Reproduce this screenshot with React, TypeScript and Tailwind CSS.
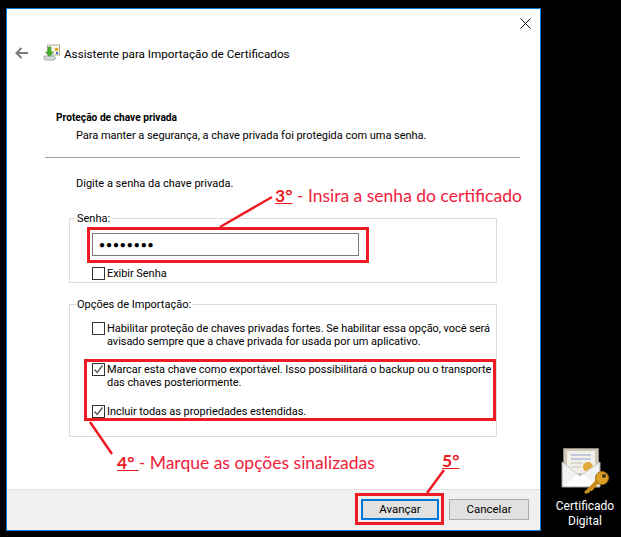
const ui = "font-['Roboto',sans-serif] text-[11px] leading-[13px] text-black";

function Check({ checked }: { checked?: boolean }) {
  return (
    <span className="flex h-[13px] w-[13px] shrink-0 items-center justify-center border border-[#333333] bg-white">
      {checked ? (
        <svg width="11" height="11" viewBox="0 0 11 11" fill="none">
          <path d="M1.5 5.5 4.2 8.5 9.5 1.5" stroke="#555555" strokeWidth="1.3" />
        </svg>
      ) : null}
    </span>
  );
}

function Option({ checked, children, className }: { checked?: boolean; children: React.ReactNode; className?: string }) {
  return (
    <div className={`flex gap-[2px] ${className ?? ''}`}>
      <Check checked={checked} />
      <p className="whitespace-nowrap tracking-[-0.05px]">{children}</p>
    </div>
  );
}

function Group({ label, className, children }: { label: string; className: string; children: React.ReactNode }) {
  return (
    <fieldset className={`ml-[62px] w-[428px] border border-[#dcdcdc] ${className}`}>
      <legend className="ml-[6px] px-[1px] leading-[13px]">{label}</legend>
      {children}
    </fieldset>
  );
}

function WizardIcon() {
  return (
    <svg width="17" height="17" viewBox="0 0 17 17">
      <rect x="4.500" y="1" width="12" height="10" fill="#f4f1e6" stroke="#b5ad95" />
      <path d="M1 12h10l2 2-2 2H2l-1-2z" fill="#d5d9dc" stroke="#8d9499" strokeWidth=".7" />
      <path d="M8 3v5h2.500L6.500 12.500 2.500 8H5V3z" fill="#48b02c" stroke="#2f8a1c" strokeWidth=".5" />
      <rect x="12" y="4" width="3" height="3" fill="#e8a020" />
      <rect x="13" y="8" width="2" height="2" fill="#2f6fcb" />
    </svg>
  );
}

function CertIcon() {
  return (
    <svg width="48" height="50" viewBox="0 0 48 50">
      <path d="M2.500 2.500h35v26h-35z" fill="#cfc8b8" stroke="#8f897b" />
      <path d="M6 5h28v22H6z" fill="#f1efe8" />
      <path d="M10 9h20M10 13h20" stroke="#aebed8" strokeWidth="1.500" />
      <path d="M10 17h12M10 21h10" stroke="#d5d2c8" strokeWidth="1.500" />
      <circle cx="27" cy="21" r="5" fill="#e0a93a" />
      <path d="M1 16 19 29 39 16v25H1z" fill="#f2f2f2" />
      <path d="M1 41 17 28l2 2 2-2 18 13z" fill="#ffffff" />
      <path d="M1 16 19 30 39 16" fill="none" stroke="#c8c8c8" />
      <path d="M1 16v25h38V16" fill="none" stroke="#a5a5a5" />
      <path d="M36 33 23 46l2 2 2-1 1 0 1-2 2 0 9-10z" fill="#c98f1e" />
      <circle cx="41" cy="32" r="6.500" fill="#dca02a" stroke="#9b6c12" />
      <circle cx="43" cy="30" r="2" fill="#4a3a1c" />
    </svg>
  );
}

export default function App() {
  return (
    <div className={`relative h-[537px] w-[621px] overflow-hidden bg-black pl-[6px] pt-[8px] ${ui}`}>
      <div className="flex h-[523px] w-[535px] flex-col border border-[#0078d7] bg-white">
        <div className="flex h-[20px] justify-end pr-[9px] pt-[9px]">
          <svg width="11" height="11" viewBox="0 0 11 11" stroke="#111111" fill="none">
            <path d="M.5.5l10 10M10.500.5l-10 10" />
          </svg>
        </div>
        <div className="mt-[15px] flex h-[17px] items-center pl-[8px]">
          <svg width="13" height="12" viewBox="0 0 13 12" fill="none" stroke="#7a7a7a" strokeWidth="2">
            <path d="M13 6H2M6.500 1 1.500 6l5 5" />
          </svg>
          <span className="ml-[15px]"><WizardIcon /></span>
          <span className="ml-[4px] pt-[3px] text-[11.700px]">Assistente para Importação de Certificados</span>
        </div>
        <h2 className="ml-[49px] mt-[50px] text-[10.200px] font-bold">Proteção de chave privada</h2>
        <p className="ml-[69px] mt-[5px] tracking-[-0.03px]">Para manter a segurança, a chave privada foi protegida com uma senha.</p>
        <div className="ml-[38px] mt-[15px] h-px w-[475px] bg-[#a0a0a0]" />
        <p className="ml-[69px] mt-[19px]">Digite a senha da chave privada.</p>

        <Group label="Senha:" className="mt-[22px] h-[71px]">
          <div className="pl-[22px] pt-[8px]">
            <div className="flex h-[23px] w-[267px] items-center border border-[#7a7a7a] pl-[6px] text-[10px] tracking-[0.9px]">
              ●●●●●●●●
            </div>
            <div className="mt-[11px]">
              <Option>Exibir Senha</Option>
            </div>
          </div>
        </Group>

        <Group label="Opções de Importação:" className="mt-[15px] h-[139px]">
          <div className="pl-[22px] pt-[11px]">
            <Option>
              Habilitar proteção de chaves privadas fortes. Se habilitar essa opção, você será<br />
              avisado sempre que a chave privada for usada por um aplicativo.
            </Option>
            <Option checked className="mt-[15px]">
              Marcar esta chave como exportável. Isso possibilitará o backup ou o transporte<br />
              das chaves posteriormente.
            </Option>
            <Option checked className="mt-[16px]">
              Incluir todas as propriedades estendidas.
            </Option>
          </div>
        </Group>

        <div className="mt-auto flex h-[41px] justify-end gap-[10px] border-t border-[#dfdfdf] bg-[#f0f0f0] pr-[11px] pt-[9px] text-[11.500px]">
          <button className="h-[21px] w-[78px] border-2 border-[#0078d7] bg-[#e1e1e1]">Avançar</button>
          <button className="h-[21px] w-[80px] border border-[#adadad] bg-[#e1e1e1]">Cancelar</button>
        </div>
      </div>

      {/* anotacoes em vermelho por cima do assistente */}
      <div className="absolute left-[87px] top-[227px] h-[36px] w-[282px] border-[3px] border-[#ed1c24]" />
      <div className="absolute left-[84px] top-[359px] h-[62px] w-[412px] border-[3px] border-[#ed1c24]" />
      <div className="absolute left-[355px] top-[493px] h-[32px] w-[89px] border-[3px] border-[#ed1c24]" />
      <svg className="absolute left-0 top-0" width="621" height="537" fill="none" stroke="#ed1c24" strokeWidth="2.500">
        <path d="M272 197 220 227M90 422 112 454M444 470 427 493" />
      </svg>
      <p className="absolute left-[275px] top-[184px] whitespace-nowrap font-['Lato',sans-serif] text-[17.500px] leading-[24px] text-[#f0203a]">
        <b className="text-[#ed1c24] underline">3°</b> - Insira a senha do certificado
      </p>
      <p className="absolute left-[117px] top-[451px] whitespace-nowrap font-['Lato',sans-serif] text-[17.500px] leading-[24px] text-[#f0203a]">
        <b className="text-[#ed1c24] underline">4° </b> - Marque as opções sinalizadas
      </p>
      <p className="absolute left-[442px] top-[449px] whitespace-nowrap font-['Lato',sans-serif] text-[17.500px] font-bold leading-[24px] text-[#ed1c24] underline">
        5°
      </p>

      {/* icone da area de trabalho */}
      <div className="absolute left-[548px] top-[446px] flex w-[74px] flex-col items-center text-center text-[12px] text-white">
        <CertIcon />
        <span className="mt-[3px] leading-[15px]">Certificado<br />Digital</span>
      </div>
    </div>
  );
}
